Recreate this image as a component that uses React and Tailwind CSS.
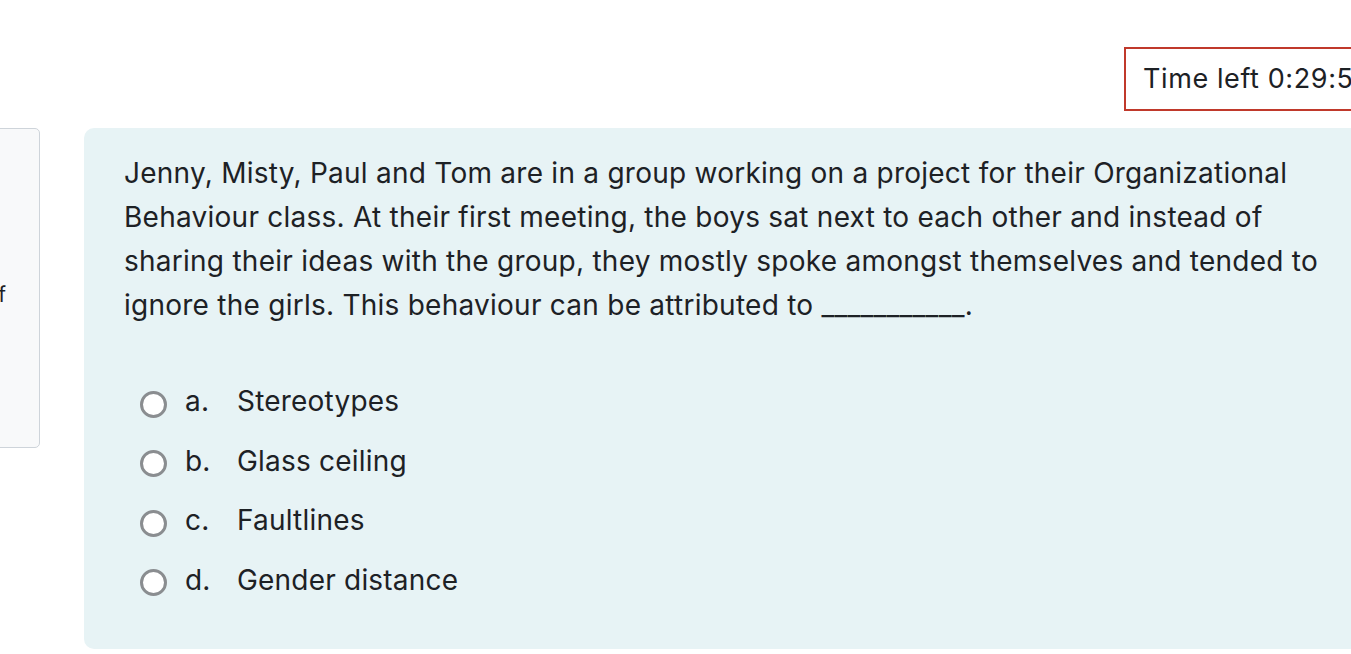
import React from "react";

const options = [
  { letter: "a.", text: "Stereotypes" },
  { letter: "b.", text: "Glass ceiling" },
  { letter: "c.", text: "Faultlines" },
  { letter: "d.", text: "Gender distance" },
];

const App = () => {
  return (
    <div
      className="w-[1351px] h-[654px] overflow-hidden bg-white text-[#1d2125]"
      style={{ fontFamily: "Inter, 'Liberation Sans', sans-serif" }}
    >
      {/* Timer */}
      <div className="flex pt-[47px] pl-[1124px]">
        <div className="shrink-0 h-[64px] w-[300px] border-2 border-[#c0392b] flex items-center pl-[17px] text-[27px] tracking-[0.6px]">
          Time left 0:29:54
        </div>
      </div>

      <div className="flex items-start mt-[17px] w-[1500px]">
        {/* Info panel, mostly off screen */}
        <div className="shrink-0 w-[300px] ml-[-260px] h-[320px] bg-[#f8f9fa] border border-[#ced4da] rounded-[5px] flex items-center justify-end pr-[33px] pt-[14px] text-[21px]">
          out of
        </div>

        {/* Question card */}
        <div className="shrink-0 ml-[44px] w-[1320px] h-[521px] bg-[#e7f3f5] rounded-[10px] pl-[40px] pr-[50px] pt-[23px]">
          <p className="whitespace-nowrap text-[28px] leading-[44px] tracking-[0.25px]">
            Jenny, Misty, Paul and Tom are in a group working on a project for their Organizational
            <br />
            Behaviour class. At their first meeting, the boys sat next to each other and instead of
            <br />
            sharing their ideas with the group, they mostly spoke amongst themselves and tended to
            <br />
            ignore the girls. This behaviour can be attributed to ___________.
          </p>

          <div className="mt-[52px] flex flex-col gap-[15px] pl-[16px]">
            {options.map((o) => (
              <label key={o.letter} className="flex items-center h-[44.5px] text-[28px] tracking-[0.2px]">
                <span className="w-[27px] h-[27px] rounded-full border-[3px] border-[#8a8d90] bg-white shrink-0 mt-[6px]" />
                <span className="ml-[18px] w-[52px]">{o.letter}</span>
                <span>{o.text}</span>
              </label>
            ))}
          </div>
        </div>
      </div>
    </div>
  );
};

export default App;
